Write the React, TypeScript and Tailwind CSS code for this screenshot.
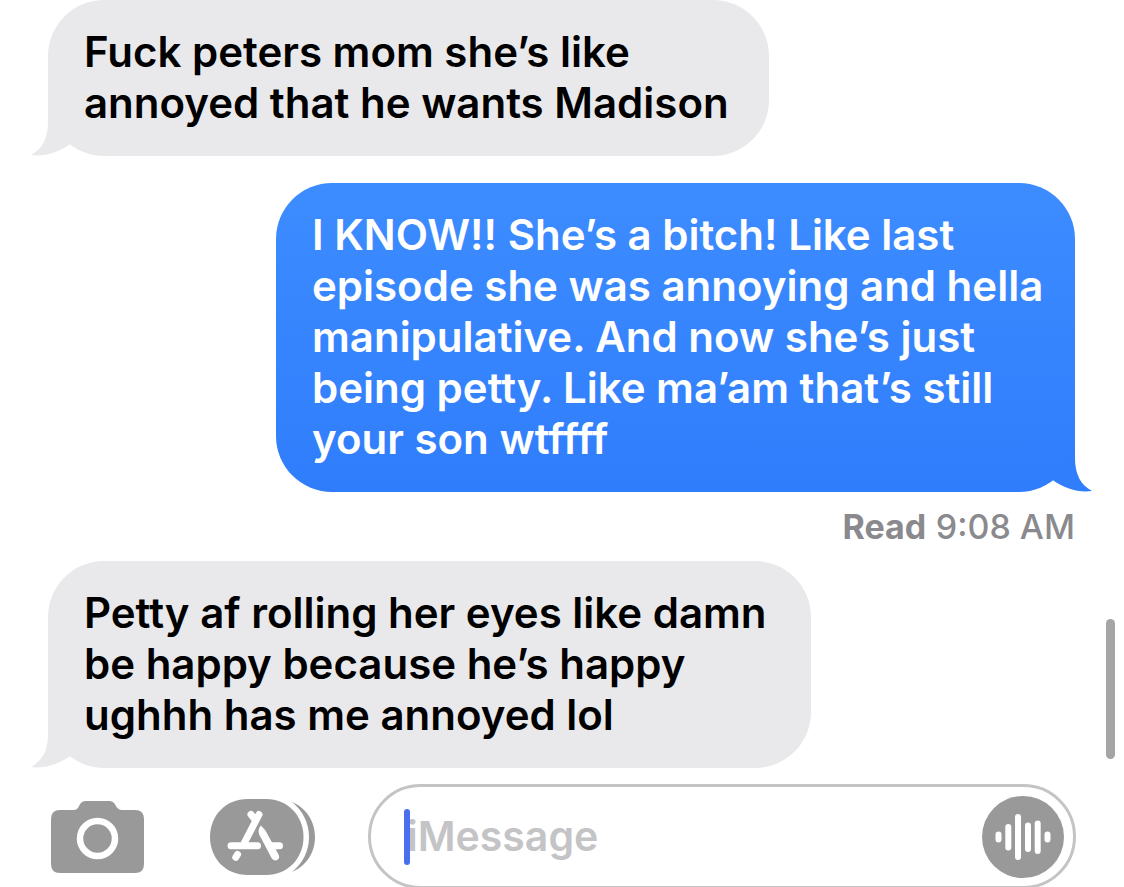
import type { ReactNode } from "react";

type Message = {
  id: number;
  from: "me" | "them";
  width: string;
  text: string;
  readAt?: string;
};

const messages: Message[] = [
  {
    id: 1,
    from: "them",
    width: "w-[721px]",
    text: "Fuck peters mom she’s like\nannoyed that he wants Madison",
  },
  {
    id: 2,
    from: "me",
    width: "w-[799px]",
    text: "I KNOW!! She’s a bitch! Like last\nepisode she was annoying and hella\nmanipulative. And now she’s just\nbeing petty. Like ma’am that’s still\nyour son wtffff",
    readAt: "9:08 AM",
  },
  {
    id: 3,
    from: "them",
    width: "w-[763px]",
    text: "Petty af rolling her eyes like damn\nbe happy because he’s happy\nughhh has me annoyed lol",
  },
];

const Tail = ({ className }: { className: string }) => (
  <svg viewBox="0 -12 46 60" className={`absolute bottom-0 h-[60px] w-[46px] ${className}`} aria-hidden="true">
    <path fill="currentColor" d="M17 -12V14C17 31 11 41 0 47C14 49 27 44 38 37L46 30V-12Z" />
  </svg>
);

// the body sits on top of the tail so only the tip shows
const Bubble = ({ message }: { message: Message }) => {
  const mine = message.from === "me";
  return (
    <div className={`relative max-w-full ${message.width} ${mine ? "self-end" : "self-start"}`}>
      <Tail className={mine ? "-right-[17px] -scale-x-100 text-[#317efd]" : "-left-[17px] text-[#e9e9eb]"} />
      <p
        className={`relative rounded-[56px] pt-[26px] pb-7 pl-9 text-[42px] leading-[51px] font-semibold whitespace-pre-line [font-variant-ligatures:none] ${
          mine ? "bg-linear-to-b from-[#3d8cff] to-[#307dfc] pr-6 text-white" : "bg-[#e9e9eb] pr-8 text-black"
        }`}
      >
        {message.text}
      </p>
    </div>
  );
};

const CameraIcon = () => (
  <svg viewBox="0 0 93 72" className="h-[72px] w-[93px]" fill="#999" aria-hidden="true">
    <path d="M9 9H22C26 9 27 7 28 5C30 1 32 0 36 0H57C61 0 63 1 65 5C66 7 68 9 71 9H84Q93 9 93 18V63Q93 72 84 72H9Q0 72 0 63V18Q0 9 9 9Z" />
    <circle cx="46.5" cy="37.5" r="17.5" fill="none" stroke="#fff" strokeWidth="6.5" />
  </svg>
);

const AppsIcon = () => (
  <svg viewBox="0 0 105 76" className="h-[76px] w-[105px]" aria-hidden="true">
    <path fill="#999" d="M38 0H56C78 0 93.500 17 93.500 38S78 76 56 76H38C15 76 0 59 0 38S15 0 38 0Z" />
    <path fill="#999" d="M82 3C96 9 105 22 105 38S96 67 82 73C93 64 99 52 99 38S93 12 82 3Z" />
    <g fill="none" stroke="#fff" strokeWidth="7" strokeLinecap="round" strokeLinejoin="round">
      <path d="M49 15.500L34.500 43.500" />
      <path d="M41 15.500L45.500 21" />
      <path d="M21 46.700H47.500" />
      <path d="M60 46.700H69.500" />
      <path d="M27.500 55.500L25.800 58.300" />
    </g>
    <path
      fill="#fff"
      d="M51 26.500C48 29.500 48 33.500 50 37L61.500 59C63 61.500 65.500 62 67.500 60.800C69.500 59.500 69.500 57.500 68.500 55.500L56 32.500C54.500 30 53 29 51 26.500Z"
    />
  </svg>
);

const WaveIcon = () => (
  <svg viewBox="0 0 82 82" className="size-[82px]" aria-hidden="true">
    <circle cx="41" cy="41" r="41" fill="#999" />
    <g stroke="#fff" strokeWidth="6" strokeLinecap="round">
      <path d="M16.500 38.500V43.500" />
      <path d="M26.300 31V51.500" />
      <path d="M36 21V61" />
      <path d="M46 29.500V53" />
      <path d="M55.700 27.500V55" />
      <path d="M65.500 38.500V43.500" />
    </g>
  </svg>
);

const IconButton = ({ label, className = "", children }: { label: string; className?: string; children: ReactNode }) => (
  <button type="button" aria-label={label} className={`shrink-0 ${className}`}>
    {children}
  </button>
);

export default function App() {
  return (
    <main className="relative overflow-hidden bg-white font-[Inter,'Liberation_Sans',sans-serif]">
      <ul className="flex flex-col pr-[49px] pl-12">
        {messages.map((message) => (
          <li key={message.id} className={`flex flex-col ${message.from === "me" ? "pt-[27px]" : ""}`}>
            <Bubble message={message} />
            {message.readAt && (
              <p className="pt-[15px] pb-[14px] text-right text-[34px] leading-10 text-[#8a8a8e]">
                <span className="font-bold">Read</span> <span className="font-medium">{message.readAt}</span>
              </p>
            )}
          </li>
        ))}
      </ul>

      {/* scroll indicator */}
      <div className="absolute right-[9px] bottom-32 h-[140px] w-[9px] rounded-full bg-[#a5a5a5]" />

      {/* the field runs slightly past the bottom edge */}
      <form className="-mb-0.5 flex items-center pt-4 pr-12 pl-[51px]">
        <IconButton label="Camera">
          <CameraIcon />
        </IconButton>
        <IconButton label="Apps" className="ml-[66px]">
          <AppsIcon />
        </IconButton>
        <div className="relative ml-[53px] flex h-[105px] min-w-0 flex-1 items-center rounded-full border-3 border-[#c4c4c6] pr-[9px] pl-9">
          <input
            type="text"
            aria-label="iMessage"
            placeholder="iMessage"
            className="min-w-0 flex-1 bg-transparent text-[41px] leading-[51px] font-semibold placeholder:text-[#c4c4c6] focus:outline-none"
          />
          {/* text cursor */}
          <span className="absolute left-[33px] h-14 w-1.5 rounded-full bg-[#4a6fee]" />
          <IconButton label="Record audio">
            <WaveIcon />
          </IconButton>
        </div>
      </form>
    </main>
  );
}
